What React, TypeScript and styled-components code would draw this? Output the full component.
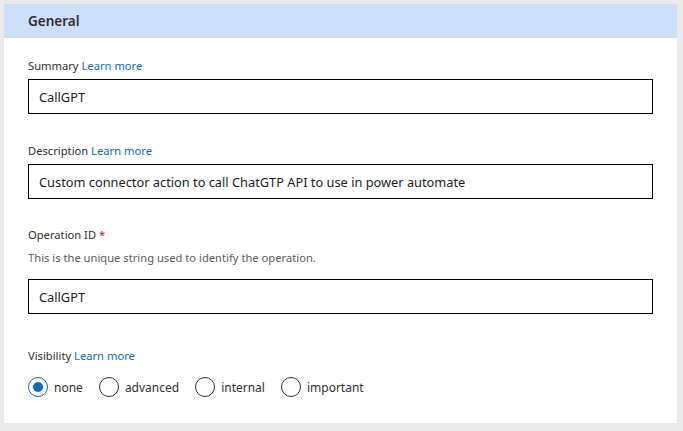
import styled, { createGlobalStyle } from "styled-components";

const GlobalStyle = createGlobalStyle`
  body {
    margin: 0;
    background: #eaeaea;
    font-family: "Segoe UI", "Noto Sans", "Open Sans", sans-serif;
  }
`;

const Page = styled.div`
  padding: 4px 6px 8px 4px;
`;

const Panel = styled.section`
  background: #ffffff;
  height: 419px;
  display: flex;
  flex-direction: column;
`;

const Header = styled.div`
  height: 34px;
  background: #cce0fb;
  display: flex;
  align-items: center;
  padding-left: 24px;
  font-size: 13.5px;
  font-weight: 600;
  color: #323130;
`;

const Body = styled.div`
  padding: 19px 24px 0 24px;
  display: flex;
  flex-direction: column;
`;

const Field = styled.div<{ $gap?: number }>`
  display: flex;
  flex-direction: column;
  margin-bottom: ${(p) => p.$gap ?? 27}px;
`;

const Label = styled.div<{ $tight?: boolean }>`
  font-size: 11.2px;
  line-height: 17px;
  color: #323130;
  margin-bottom: ${(p) => (p.$tight ? 0 : 5)}px;
`;

const Link = styled.a`
  color: #0f6cbd;
  text-decoration: none;
`;

const Required = styled.span`
  color: #a4262c;
`;

const Hint = styled.div`
  font-size: 11.2px;
  line-height: 16px;
  color: #605e5c;
  margin: 7px 0 13px;
`;

const TextBox = styled.input`
  box-sizing: border-box;
  width: 100%;
  height: 35px;
  border: 1px solid #000;
  padding: 0 10px;
  font-family: inherit;
  font-size: 12.8px;
  color: #201f1e;
  outline: none;
`;

const RadioRow = styled.div`
  display: flex;
  align-items: center;
  gap: 16px;
  margin-top: 8px;
`;

const Option = styled.label`
  display: flex;
  align-items: center;
  gap: 6px;
  font-size: 12px;
  color: #323130;
`;

const Circle = styled.span<{ $on?: boolean }>`
  box-sizing: border-box;
  width: 20px;
  height: 20px;
  border-radius: 50%;
  border: 1px solid ${(p) => (p.$on ? "#0f6cbd" : "#323130")};
  display: flex;
  align-items: center;
  justify-content: center;
  &::after {
    content: "";
    width: 10px;
    height: 10px;
    border-radius: 50%;
    background: ${(p) => (p.$on ? "#0f6cbd" : "transparent")};
  }
`;

const options = ["none", "advanced", "internal", "important"];

export default function App() {
  return (
    <>
      <GlobalStyle />
      <Page>
        <Panel>
          <Header>General</Header>
          <Body>
            <Field $gap={28}>
              <Label>
                Summary <Link>Learn more</Link>
              </Label>
              <TextBox defaultValue="CallGPT" />
            </Field>
            <Field>
              <Label>
                Description <Link>Learn more</Link>
              </Label>
              <TextBox defaultValue="Custom connector action to call ChatGTP API to use in power automate" />
            </Field>
            <Field $gap={33}>
              <Label $tight>
                Operation ID <Required>*</Required>
              </Label>
              <Hint>This is the unique string used to identify the operation.</Hint>
              <TextBox defaultValue="CallGPT" />
            </Field>
            <Field $gap={0}>
              <Label>
                Visibility <Link>Learn more</Link>
              </Label>
              <RadioRow>
                {options.map((o, i) => (
                  <Option key={o}>
                    <Circle $on={i === 0} />
                    {o}
                  </Option>
                ))}
              </RadioRow>
            </Field>
          </Body>
        </Panel>
      </Page>
    </>
  );
}
